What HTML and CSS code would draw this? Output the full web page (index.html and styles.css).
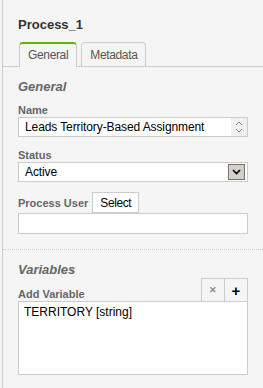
FILE: index.html
```html
<!doctype html>
<html>
  <head>
    <meta charset="UTF-8">
    <title>Process_1</title>
    <link rel="stylesheet" href="styles.css">
  </head>
  <body>
    <div class="panel">
      <h1 class="title">Process_1</h1>
      <div class="tabs">
        <div class="tab active">General</div>
        <div class="tab">Metadata</div>
      </div>

      <div class="section">
        <h2>General</h2>
        <div class="field">
          <label>Name</label>
          <div class="control">
            <span class="value">Leads Territory-Based Assignment</span>
            <span class="spin">
              <svg width="8" height="14" viewBox="0 0 8 14"><path d="M1 5 L4 2 L7 5 M1 9 L4 12 L7 9" fill="none" stroke="#888" stroke-width="1"/></svg>
            </span>
          </div>
        </div>
        <div class="field">
          <label>Status</label>
          <div class="control">
            <span class="value">Active</span>
            <span class="drop">
              <svg width="9" height="6" viewBox="0 0 9 6"><path d="M1 1 L4.5 4.5 L8 1" fill="none" stroke="#000" stroke-width="1.6"/></svg>
            </span>
          </div>
        </div>
        <div class="field user">
          <div class="row">
            <label>Process User</label>
            <button class="btn">Select</button>
          </div>
          <div class="control tall"></div>
        </div>
      </div>

      <div class="section vars">
        <h2>Variables</h2>
        <div class="row bottom">
          <label>Add Variable</label>
          <div class="tools">
            <button class="tool del">&#x2715;</button>
            <button class="tool add">+</button>
          </div>
        </div>
        <div class="list">TERRITORY [string]</div>
      </div>
    </div>
  </body>
</html>
```

FILE: styles.css
```css
body{
  margin: 0;
  background: #f5f5f5;
  font-family: "Liberation Sans", Arial, sans-serif;
}
.panel{
  margin-left: 2px;
  border-left: 1px solid #ccc;
  min-height: 388px;
  background: #f5f5f5;
}
.title{
  margin: 0;
  padding: 17px 15px 0;
  font-size: 13px;
  line-height: 15px;
  color: #333;
}
.tabs{
  display: flex;
  align-items: flex-start;
  gap: 4px;
  margin-top: 10px;
  padding-left: 16px;
  border-bottom: 1px solid #ccc;
}
.tab{
  padding: 2px 8px 1px;
  line-height: 20px;
  font-size: 12px;
  letter-spacing: -0.35px;
  color: #555;
  border: 1px solid #ccc;
  border-bottom: 0;
  border-radius: 4px 4px 0 0;
  background: #f5f5f5;
}
.tab.active{
  padding: 1px 8px 2px;
  margin-bottom: -1px;
  border-top: 2px solid #5fb404;
}
.section{
  padding: 12px 15px 15px;
  border-bottom: 1px dotted #ccc;
}
.section.vars{
  border-bottom: 0;
}
h2{
  margin: 0 0 10px;
  font-size: 13px;
  line-height: 15px;
  font-style: italic;
  color: #666;
}
.vars h2{
  margin-bottom: 1px;
}
label{
  display: block;
  font-size: 11px;
  line-height: 13px;
  font-weight: bold;
  color: #666;
}
.field + .field{
  margin-top: 12px;
}
.field.user{
  margin-top: 10px;
}
.control{
  display: flex;
  align-items: center;
  height: 20px;
  box-sizing: border-box;
  border: 1px solid #ccc;
  background: #fff;
  font-size: 12px;
  letter-spacing: -0.1px;
  color: #000;
}
.control.tall{
  height: 21px;
}
.value{
  flex: 1;
  padding-left: 6px;
  white-space: nowrap;
  overflow: hidden;
}
.spin{
  display: flex;
  align-items: center;
  justify-content: center;
  width: 16px;
  height: 18px;
  background: #f0f0f0;
}
.drop{
  display: flex;
  align-items: center;
  justify-content: center;
  width: 15px;
  height: 14px;
  margin-right: 2px;
  border: 1px solid #707070;
  background: #d4d0c8;
}
.row{
  display: flex;
  align-items: baseline;
  gap: 4px;
}
.btn{
  height: 21px;
  padding: 0 7px;
  border: 1px solid #ccc;
  background: #fff;
  font-family: inherit;
  font-size: 12px;
  letter-spacing: -0.4px;
  color: #000;
}
.row.bottom{
  align-items: flex-end;
  justify-content: space-between;
}
.tools{
  display: flex;
}
.tool{
  width: 24px;
  height: 23px;
  padding: 0;
  border: 1px solid #ccc;
  border-bottom: 0;
  background: #f5f5f5;
  font-family: inherit;
  font-weight: bold;
}
.tool + .tool{
  margin-left: -1px;
}
.tool.del{
  font-size: 9px;
  color: #888;
}
.tool.add{
  font-size: 15px;
  color: #000;
}
.list{
  height: 74px;
  box-sizing: border-box;
  padding: 3px 5px;
  border: 1px solid #ccc;
  background: #fff;
  font-size: 12px;
  line-height: 15px;
  color: #000;
}
```
